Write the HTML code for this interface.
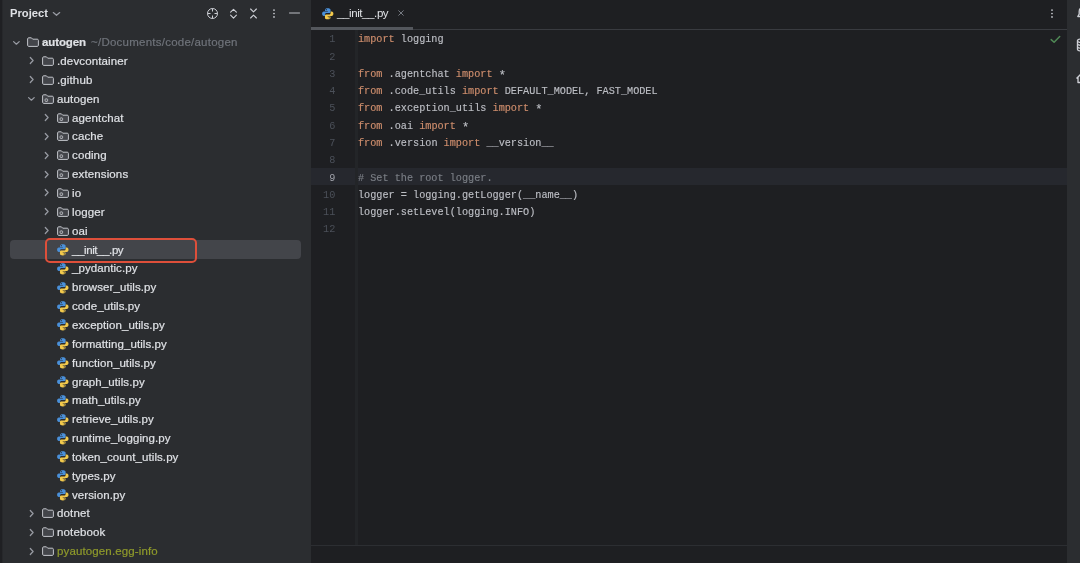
<!DOCTYPE html>
<html lang="en">
<head>
<meta charset="utf-8">
<title>autogen – __init__.py</title>
<style>
html,body{margin:0;padding:0;background:#1e1f22;}
body{width:1080px;height:563px;overflow:hidden;position:relative;font-family:"Liberation Sans",sans-serif;}
#panel{position:absolute;left:0;top:0;width:311px;height:563px;background:#2b2d30;}

#editor{position:absolute;left:311px;top:0;width:756px;height:563px;background:#1e1f22;}
#ledge{position:absolute;left:0;top:0;width:3px;height:563px;background:linear-gradient(90deg,#1f2023 0,#1f2023 55%,#2b2d30 100%);}
#rbar{position:absolute;left:1067px;top:0;width:13px;height:563px;background:#2b2d30;}
.tl,.cl,.ln,#hdr,#tabname{will-change:transform;}
.ic{position:absolute;display:block;overflow:visible;}
.tl{position:absolute;white-space:nowrap;font-size:11.500px;line-height:16px;color:#dfe1e5;letter-spacing:.13px;-webkit-text-stroke:.2px currentColor;}
.tl.f{letter-spacing:.08px;}
.tl.un{letter-spacing:-.4px;}
.tl.b{font-weight:bold;letter-spacing:-.1px;}
.tl.path{color:#6f737a;font-weight:normal;letter-spacing:.24px;}
.tl.ex{color:#8f9a2b;}
.selrow{position:absolute;left:10.200px;width:291.300px;height:18.700px;background:#43454a;border-radius:4px;}
.redbox{position:absolute;left:44.700px;width:152.500px;height:25.300px;border:2.400px solid #de4f3a;border-radius:5px;box-sizing:border-box;}
#hdr{position:absolute;left:10.200px;top:5.400px;font-size:11.200px;line-height:16px;font-weight:bold;color:#dfe1e5;}
/* editor */
#tabline{position:absolute;left:311px;top:28.800px;width:756px;height:1px;background:#393b40;}
#tabsel{position:absolute;left:311px;top:27.300px;width:102.300px;height:2.500px;background:#54575d;}
#tabname{position:absolute;left:337.300px;top:4.900px;font-size:11.500px;line-height:16px;color:#dfe1e5;white-space:nowrap;letter-spacing:-.4px;}
#gutline{position:absolute;left:354.500px;top:29.500px;width:3px;height:515px;background:#232528;}
#curline{position:absolute;left:311px;top:167.800px;width:756px;height:17.200px;background:#26282e;}
#hline{position:absolute;left:311px;top:544.700px;width:756px;height:1.400px;background:#2c2e32;}
.ln{position:absolute;left:311px;width:24.300px;text-align:right;font-family:"Liberation Mono",monospace;font-size:10.200px;line-height:16px;color:#4b5059;}
.ln.cur{color:#a1a3ab;}
.cl{position:absolute;left:358px;white-space:pre;font-family:"Liberation Mono",monospace;font-size:10.200px;line-height:16px;color:#bcbec4;-webkit-text-stroke:.15px currentColor;}
.cl i{font-style:normal;}
.cl .a{position:relative;top:2.200px;font-size:12px;line-height:10px;}
.cl .k{color:#cf8e6d;}
.cl .c{color:#7a7e85;}
</style>
</head>
<body>
<div id="panel"></div>
<div id="editor"></div>
<div id="rbar"></div>
<div id="ledge"></div>

<!-- project header -->
<span id="hdr">Project</span>
<svg class="ic" style="left:52.200px;top:11.300px" width="9" height="6" viewBox="0 0 9 6"><path d="M1.300 1.600l3.200 2.700 3.200-2.700" fill="none" stroke="#989ba3" stroke-width="1.250" stroke-linecap="round" stroke-linejoin="round"/></svg>
<!-- header tool icons -->
<svg class="ic" style="left:206px;top:7px" width="13" height="13" viewBox="0 0 13 13"><circle cx="6.500" cy="6.500" r="5" fill="none" stroke="#ced0d6" stroke-width="1"/><path d="M6.500 1.500v3M6.500 8.500v3M1.500 6.500h3M8.500 6.500h3" stroke="#ced0d6" stroke-width="1"/></svg>
<svg class="ic" style="left:229px;top:7px" width="9" height="13" viewBox="0 0 9 13"><path d="M1.600 5.200l2.900-2.900 2.900 2.900M1.600 8.200l2.900 2.900 2.900-2.900" fill="none" stroke="#ced0d6" stroke-width="1.100" stroke-linecap="round" stroke-linejoin="round"/></svg>
<svg class="ic" style="left:249px;top:7px" width="9" height="13" viewBox="0 0 9 13"><path d="M1.600 2l2.900 2.900L7.400 2M1.600 11l2.900-2.900L7.400 11" fill="none" stroke="#ced0d6" stroke-width="1.100" stroke-linecap="round" stroke-linejoin="round"/></svg>
<svg class="ic" style="left:272px;top:8px" width="4" height="11" viewBox="0 0 4 11"><circle cx="2" cy="2.100" r="0.850" fill="#ced0d6"/><circle cx="2" cy="5.500" r="0.850" fill="#ced0d6"/><circle cx="2" cy="8.900" r="0.850" fill="#ced0d6"/></svg>
<svg class="ic" style="left:289px;top:12.200px" width="11" height="2" viewBox="0 0 11 2"><path d="M0.500 1h10" stroke="#ced0d6" stroke-width="0.900" stroke-linecap="round"/></svg>

<!-- tree -->
<svg class="ic" style="left:12.1px;top:39.7px" width="9" height="6" viewBox="0 0 9 6"><path d="M1.600 1.600l2.800 2.600 2.800-2.600" fill="none" stroke="#989ba3" stroke-width="1.250" stroke-linecap="round" stroke-linejoin="round"/></svg>
<svg class="ic" style="left:27px;top:37.1px" width="12" height="10.500" viewBox="0 0 12 10.500"><path d="M1.700 0.800h2.700l1.300 1.400h4.600c.6 0 1.100.500 1.100 1.100v5c0 .6-.5 1.100-1.100 1.100H1.700c-.6 0-1.100-.5-1.100-1.100V1.900c0-.6.5-1.100 1.100-1.100z" fill="#43454a" stroke="#c3c5cb" stroke-width="1"/></svg>
<span class="tl b" style="left:41.5px;top:34.2px">autogen</span><span class="tl path" style="left:90.500px;top:34.2px">~/Documents/code/autogen</span>
<svg class="ic" style="left:28.5px;top:56.45px" width="6" height="9" viewBox="0 0 6 9"><path d="M1.300 1.500l2.800 3-2.800 3" fill="none" stroke="#989ba3" stroke-width="1.250" stroke-linecap="round" stroke-linejoin="round"/></svg>
<svg class="ic" style="left:42px;top:55.95px" width="12" height="10.500" viewBox="0 0 12 10.500"><path d="M1.700 0.800h2.700l1.300 1.400h4.600c.6 0 1.100.500 1.100 1.100v5c0 .6-.5 1.100-1.100 1.100H1.700c-.6 0-1.100-.5-1.100-1.100V1.900c0-.6.5-1.100 1.100-1.100z" fill="#43454a" stroke="#c3c5cb" stroke-width="1"/></svg>
<span class="tl" style="left:56.5px;top:53.05px">.devcontainer</span>
<svg class="ic" style="left:28.5px;top:75.3px" width="6" height="9" viewBox="0 0 6 9"><path d="M1.300 1.500l2.800 3-2.800 3" fill="none" stroke="#989ba3" stroke-width="1.250" stroke-linecap="round" stroke-linejoin="round"/></svg>
<svg class="ic" style="left:42px;top:74.8px" width="12" height="10.500" viewBox="0 0 12 10.500"><path d="M1.700 0.800h2.700l1.300 1.400h4.600c.6 0 1.100.500 1.100 1.100v5c0 .6-.5 1.100-1.100 1.100H1.700c-.6 0-1.100-.5-1.100-1.100V1.900c0-.6.5-1.100 1.100-1.100z" fill="#43454a" stroke="#c3c5cb" stroke-width="1"/></svg>
<span class="tl" style="left:56.5px;top:71.9px">.github</span>
<svg class="ic" style="left:27.1px;top:96.25px" width="9" height="6" viewBox="0 0 9 6"><path d="M1.600 1.600l2.800 2.600 2.800-2.600" fill="none" stroke="#989ba3" stroke-width="1.250" stroke-linecap="round" stroke-linejoin="round"/></svg>
<svg class="ic" style="left:42px;top:93.65px" width="12" height="10.500" viewBox="0 0 12 10.500"><path d="M1.700 0.800h2.700l1.300 1.400h4.600c.6 0 1.100.500 1.100 1.100v5c0 .6-.5 1.100-1.100 1.100H1.700c-.6 0-1.100-.5-1.100-1.100V1.900c0-.6.5-1.100 1.100-1.100z" fill="#43454a" stroke="#c3c5cb" stroke-width="1"/><rect x="3.100" y="4.900" width="2.500" height="2.500" rx="0.600" fill="none" stroke="#c3c5cb" stroke-width="0.9"/></svg>
<span class="tl" style="left:56.5px;top:90.75px">autogen</span>
<svg class="ic" style="left:43.5px;top:113px" width="6" height="9" viewBox="0 0 6 9"><path d="M1.300 1.500l2.800 3-2.800 3" fill="none" stroke="#989ba3" stroke-width="1.250" stroke-linecap="round" stroke-linejoin="round"/></svg>
<svg class="ic" style="left:57px;top:112.5px" width="12" height="10.500" viewBox="0 0 12 10.500"><path d="M1.700 0.800h2.700l1.300 1.400h4.600c.6 0 1.100.500 1.100 1.100v5c0 .6-.5 1.100-1.100 1.100H1.700c-.6 0-1.100-.5-1.100-1.100V1.900c0-.6.5-1.100 1.100-1.100z" fill="#43454a" stroke="#c3c5cb" stroke-width="1"/><rect x="3.100" y="4.900" width="2.500" height="2.500" rx="0.600" fill="none" stroke="#c3c5cb" stroke-width="0.9"/></svg>
<span class="tl" style="left:71.5px;top:109.6px">agentchat</span>
<svg class="ic" style="left:43.5px;top:131.85px" width="6" height="9" viewBox="0 0 6 9"><path d="M1.300 1.500l2.800 3-2.800 3" fill="none" stroke="#989ba3" stroke-width="1.250" stroke-linecap="round" stroke-linejoin="round"/></svg>
<svg class="ic" style="left:57px;top:131.35px" width="12" height="10.500" viewBox="0 0 12 10.500"><path d="M1.700 0.800h2.700l1.300 1.400h4.600c.6 0 1.100.500 1.100 1.100v5c0 .6-.5 1.100-1.100 1.100H1.700c-.6 0-1.100-.5-1.100-1.100V1.900c0-.6.5-1.100 1.100-1.100z" fill="#43454a" stroke="#c3c5cb" stroke-width="1"/><rect x="3.100" y="4.900" width="2.500" height="2.500" rx="0.600" fill="none" stroke="#c3c5cb" stroke-width="0.9"/></svg>
<span class="tl" style="left:71.5px;top:128.45px">cache</span>
<svg class="ic" style="left:43.5px;top:150.7px" width="6" height="9" viewBox="0 0 6 9"><path d="M1.300 1.500l2.800 3-2.800 3" fill="none" stroke="#989ba3" stroke-width="1.250" stroke-linecap="round" stroke-linejoin="round"/></svg>
<svg class="ic" style="left:57px;top:150.2px" width="12" height="10.500" viewBox="0 0 12 10.500"><path d="M1.700 0.800h2.700l1.300 1.400h4.600c.6 0 1.100.500 1.100 1.100v5c0 .6-.5 1.100-1.100 1.100H1.700c-.6 0-1.100-.5-1.100-1.100V1.900c0-.6.5-1.100 1.100-1.100z" fill="#43454a" stroke="#c3c5cb" stroke-width="1"/><rect x="3.100" y="4.900" width="2.500" height="2.500" rx="0.600" fill="none" stroke="#c3c5cb" stroke-width="0.9"/></svg>
<span class="tl" style="left:71.5px;top:147.3px">coding</span>
<svg class="ic" style="left:43.5px;top:169.55px" width="6" height="9" viewBox="0 0 6 9"><path d="M1.300 1.500l2.800 3-2.800 3" fill="none" stroke="#989ba3" stroke-width="1.250" stroke-linecap="round" stroke-linejoin="round"/></svg>
<svg class="ic" style="left:57px;top:169.05px" width="12" height="10.500" viewBox="0 0 12 10.500"><path d="M1.700 0.800h2.700l1.300 1.400h4.600c.6 0 1.100.500 1.100 1.100v5c0 .6-.5 1.100-1.100 1.100H1.700c-.6 0-1.100-.5-1.100-1.100V1.900c0-.6.5-1.100 1.100-1.100z" fill="#43454a" stroke="#c3c5cb" stroke-width="1"/><rect x="3.100" y="4.900" width="2.500" height="2.500" rx="0.600" fill="none" stroke="#c3c5cb" stroke-width="0.9"/></svg>
<span class="tl" style="left:71.5px;top:166.15px">extensions</span>
<svg class="ic" style="left:43.5px;top:188.4px" width="6" height="9" viewBox="0 0 6 9"><path d="M1.300 1.500l2.800 3-2.800 3" fill="none" stroke="#989ba3" stroke-width="1.250" stroke-linecap="round" stroke-linejoin="round"/></svg>
<svg class="ic" style="left:57px;top:187.9px" width="12" height="10.500" viewBox="0 0 12 10.500"><path d="M1.700 0.800h2.700l1.300 1.400h4.600c.6 0 1.100.500 1.100 1.100v5c0 .6-.5 1.100-1.100 1.100H1.700c-.6 0-1.100-.5-1.100-1.100V1.900c0-.6.5-1.100 1.100-1.100z" fill="#43454a" stroke="#c3c5cb" stroke-width="1"/><rect x="3.100" y="4.900" width="2.500" height="2.500" rx="0.600" fill="none" stroke="#c3c5cb" stroke-width="0.9"/></svg>
<span class="tl" style="left:71.5px;top:185px">io</span>
<svg class="ic" style="left:43.5px;top:207.25px" width="6" height="9" viewBox="0 0 6 9"><path d="M1.300 1.500l2.800 3-2.800 3" fill="none" stroke="#989ba3" stroke-width="1.250" stroke-linecap="round" stroke-linejoin="round"/></svg>
<svg class="ic" style="left:57px;top:206.75px" width="12" height="10.500" viewBox="0 0 12 10.500"><path d="M1.700 0.800h2.700l1.300 1.400h4.600c.6 0 1.100.500 1.100 1.100v5c0 .6-.5 1.100-1.100 1.100H1.700c-.6 0-1.100-.5-1.100-1.100V1.900c0-.6.5-1.100 1.100-1.100z" fill="#43454a" stroke="#c3c5cb" stroke-width="1"/><rect x="3.100" y="4.900" width="2.500" height="2.500" rx="0.600" fill="none" stroke="#c3c5cb" stroke-width="0.9"/></svg>
<span class="tl" style="left:71.5px;top:203.85px">logger</span>
<svg class="ic" style="left:43.5px;top:226.1px" width="6" height="9" viewBox="0 0 6 9"><path d="M1.300 1.500l2.800 3-2.800 3" fill="none" stroke="#989ba3" stroke-width="1.250" stroke-linecap="round" stroke-linejoin="round"/></svg>
<svg class="ic" style="left:57px;top:225.6px" width="12" height="10.500" viewBox="0 0 12 10.500"><path d="M1.700 0.800h2.700l1.300 1.400h4.600c.6 0 1.100.500 1.100 1.100v5c0 .6-.5 1.100-1.100 1.100H1.700c-.6 0-1.100-.5-1.100-1.100V1.900c0-.6.5-1.100 1.100-1.100z" fill="#43454a" stroke="#c3c5cb" stroke-width="1"/><rect x="3.100" y="4.900" width="2.500" height="2.500" rx="0.600" fill="none" stroke="#c3c5cb" stroke-width="0.9"/></svg>
<span class="tl" style="left:71.5px;top:222.7px">oai</span>
<div class="selrow" style="top:240.25px"></div>
<svg class="ic" style="left:57.1px;top:244.05px" width="11.600" height="11.600" viewBox="0 0 11 11"><path d="M5.4 0.2c-1.6 0-2.5.5-2.5 1.5v1.2h2.7v.5H1.7C.7 3.400.1 4.300.1 5.500s.6 2.100 1.600 2.100h1.100V6.300c0-.9.700-1.500 1.600-1.500h2.500c.7 0 1.300-.5 1.300-1.200V1.700C8.200.700 7.200.2 5.400.2z" fill="#4a90d9"/><path d="M5.600 10.800c1.600 0 2.500-.5 2.500-1.500V8.100H5.400v-.5h3.900c1 0 1.600-.9 1.600-2.100s-.6-2.100-1.600-2.100H8.200v1.300c0 .9-.7 1.500-1.600 1.500H4.100c-.7 0-1.300.5-1.300 1.200v1.900c0 1 1 1.500 2.800 1.500z" fill="#f2c94c"/><circle cx="4.100" cy="1.600" r=".55" fill="#2b2d30"/><circle cx="6.900" cy="9.400" r=".55" fill="#2b2d30"/></svg>
<span class="tl f un" style="left:71.5px;top:241.55px">__init__.py</span>
<div class="redbox" style="top:237.95px"></div>
<svg class="ic" style="left:57.1px;top:262.9px" width="11.600" height="11.600" viewBox="0 0 11 11"><path d="M5.4 0.2c-1.6 0-2.5.5-2.5 1.5v1.2h2.7v.5H1.7C.7 3.400.1 4.300.1 5.500s.6 2.100 1.600 2.100h1.100V6.300c0-.9.700-1.500 1.600-1.500h2.500c.7 0 1.300-.5 1.300-1.200V1.700C8.200.700 7.200.2 5.400.2z" fill="#4a90d9"/><path d="M5.600 10.800c1.600 0 2.500-.5 2.500-1.500V8.100H5.400v-.5h3.900c1 0 1.600-.9 1.600-2.100s-.6-2.100-1.600-2.100H8.200v1.300c0 .9-.7 1.500-1.600 1.500H4.100c-.7 0-1.300.5-1.300 1.200v1.900c0 1 1 1.500 2.800 1.500z" fill="#f2c94c"/><circle cx="4.100" cy="1.600" r=".55" fill="#2b2d30"/><circle cx="6.900" cy="9.400" r=".55" fill="#2b2d30"/></svg>
<span class="tl f" style="left:71.5px;top:260.4px">_pydantic.py</span>
<svg class="ic" style="left:57.1px;top:281.75px" width="11.600" height="11.600" viewBox="0 0 11 11"><path d="M5.4 0.2c-1.6 0-2.5.5-2.5 1.5v1.2h2.7v.5H1.7C.7 3.400.1 4.300.1 5.500s.6 2.100 1.600 2.100h1.100V6.300c0-.9.700-1.500 1.600-1.500h2.500c.7 0 1.300-.5 1.300-1.200V1.700C8.200.700 7.200.2 5.400.2z" fill="#4a90d9"/><path d="M5.600 10.800c1.600 0 2.500-.5 2.500-1.500V8.100H5.400v-.5h3.900c1 0 1.600-.9 1.600-2.100s-.6-2.100-1.600-2.100H8.200v1.300c0 .9-.7 1.500-1.600 1.500H4.100c-.7 0-1.300.5-1.300 1.200v1.900c0 1 1 1.500 2.800 1.500z" fill="#f2c94c"/><circle cx="4.100" cy="1.600" r=".55" fill="#2b2d30"/><circle cx="6.900" cy="9.400" r=".55" fill="#2b2d30"/></svg>
<span class="tl f" style="left:71.5px;top:279.25px">browser_utils.py</span>
<svg class="ic" style="left:57.1px;top:300.6px" width="11.600" height="11.600" viewBox="0 0 11 11"><path d="M5.4 0.2c-1.6 0-2.5.5-2.5 1.5v1.2h2.7v.5H1.7C.7 3.400.1 4.300.1 5.500s.6 2.100 1.600 2.100h1.100V6.300c0-.9.700-1.500 1.600-1.500h2.500c.7 0 1.300-.5 1.300-1.200V1.700C8.200.700 7.200.2 5.400.2z" fill="#4a90d9"/><path d="M5.600 10.800c1.600 0 2.500-.5 2.500-1.500V8.100H5.400v-.5h3.900c1 0 1.600-.9 1.600-2.100s-.6-2.100-1.600-2.100H8.200v1.300c0 .9-.7 1.500-1.600 1.500H4.100c-.7 0-1.300.5-1.300 1.200v1.900c0 1 1 1.500 2.800 1.500z" fill="#f2c94c"/><circle cx="4.100" cy="1.600" r=".55" fill="#2b2d30"/><circle cx="6.900" cy="9.400" r=".55" fill="#2b2d30"/></svg>
<span class="tl f" style="left:71.5px;top:298.1px">code_utils.py</span>
<svg class="ic" style="left:57.1px;top:319.45px" width="11.600" height="11.600" viewBox="0 0 11 11"><path d="M5.4 0.2c-1.6 0-2.5.5-2.5 1.5v1.2h2.7v.5H1.7C.7 3.400.1 4.300.1 5.500s.6 2.100 1.600 2.100h1.100V6.300c0-.9.700-1.500 1.600-1.500h2.500c.7 0 1.300-.5 1.300-1.200V1.700C8.200.700 7.200.2 5.400.2z" fill="#4a90d9"/><path d="M5.600 10.800c1.600 0 2.500-.5 2.500-1.500V8.100H5.400v-.5h3.900c1 0 1.600-.9 1.600-2.100s-.6-2.100-1.600-2.100H8.200v1.300c0 .9-.7 1.500-1.600 1.500H4.100c-.7 0-1.300.5-1.300 1.200v1.900c0 1 1 1.500 2.800 1.500z" fill="#f2c94c"/><circle cx="4.100" cy="1.600" r=".55" fill="#2b2d30"/><circle cx="6.900" cy="9.400" r=".55" fill="#2b2d30"/></svg>
<span class="tl f" style="left:71.5px;top:316.95px">exception_utils.py</span>
<svg class="ic" style="left:57.1px;top:338.3px" width="11.600" height="11.600" viewBox="0 0 11 11"><path d="M5.4 0.2c-1.6 0-2.5.5-2.5 1.5v1.2h2.7v.5H1.7C.7 3.400.1 4.300.1 5.500s.6 2.100 1.600 2.100h1.100V6.300c0-.9.700-1.500 1.600-1.500h2.500c.7 0 1.300-.5 1.300-1.200V1.700C8.200.700 7.200.2 5.400.2z" fill="#4a90d9"/><path d="M5.600 10.800c1.600 0 2.500-.5 2.500-1.500V8.100H5.400v-.5h3.900c1 0 1.600-.9 1.600-2.100s-.6-2.100-1.600-2.100H8.200v1.300c0 .9-.7 1.500-1.600 1.500H4.100c-.7 0-1.300.5-1.300 1.200v1.900c0 1 1 1.500 2.800 1.500z" fill="#f2c94c"/><circle cx="4.100" cy="1.600" r=".55" fill="#2b2d30"/><circle cx="6.900" cy="9.400" r=".55" fill="#2b2d30"/></svg>
<span class="tl f" style="left:71.5px;top:335.8px">formatting_utils.py</span>
<svg class="ic" style="left:57.1px;top:357.15px" width="11.600" height="11.600" viewBox="0 0 11 11"><path d="M5.4 0.2c-1.6 0-2.5.5-2.5 1.5v1.2h2.7v.5H1.7C.7 3.400.1 4.300.1 5.500s.6 2.100 1.600 2.100h1.100V6.300c0-.9.700-1.500 1.600-1.500h2.500c.7 0 1.300-.5 1.300-1.200V1.700C8.200.700 7.200.2 5.400.2z" fill="#4a90d9"/><path d="M5.600 10.800c1.600 0 2.500-.5 2.500-1.500V8.100H5.400v-.5h3.900c1 0 1.600-.9 1.600-2.100s-.6-2.100-1.600-2.100H8.200v1.300c0 .9-.7 1.500-1.600 1.500H4.100c-.7 0-1.300.5-1.300 1.200v1.900c0 1 1 1.500 2.800 1.500z" fill="#f2c94c"/><circle cx="4.100" cy="1.600" r=".55" fill="#2b2d30"/><circle cx="6.900" cy="9.400" r=".55" fill="#2b2d30"/></svg>
<span class="tl f" style="left:71.5px;top:354.65px">function_utils.py</span>
<svg class="ic" style="left:57.1px;top:376px" width="11.600" height="11.600" viewBox="0 0 11 11"><path d="M5.4 0.2c-1.6 0-2.5.5-2.5 1.5v1.2h2.7v.5H1.7C.7 3.400.1 4.300.1 5.500s.6 2.100 1.600 2.100h1.100V6.300c0-.9.700-1.500 1.600-1.500h2.500c.7 0 1.300-.5 1.300-1.200V1.700C8.200.700 7.200.2 5.400.2z" fill="#4a90d9"/><path d="M5.600 10.800c1.600 0 2.500-.5 2.500-1.500V8.100H5.400v-.5h3.900c1 0 1.600-.9 1.600-2.100s-.6-2.100-1.600-2.100H8.200v1.300c0 .9-.7 1.500-1.600 1.500H4.100c-.7 0-1.300.5-1.300 1.200v1.900c0 1 1 1.500 2.800 1.500z" fill="#f2c94c"/><circle cx="4.100" cy="1.600" r=".55" fill="#2b2d30"/><circle cx="6.900" cy="9.400" r=".55" fill="#2b2d30"/></svg>
<span class="tl f" style="left:71.5px;top:373.5px">graph_utils.py</span>
<svg class="ic" style="left:57.1px;top:394.85px" width="11.600" height="11.600" viewBox="0 0 11 11"><path d="M5.4 0.2c-1.6 0-2.5.5-2.5 1.5v1.2h2.7v.5H1.7C.7 3.400.1 4.300.1 5.500s.6 2.100 1.600 2.100h1.100V6.300c0-.9.700-1.500 1.600-1.500h2.500c.7 0 1.300-.5 1.300-1.200V1.700C8.200.700 7.200.2 5.400.2z" fill="#4a90d9"/><path d="M5.600 10.800c1.600 0 2.500-.5 2.500-1.500V8.100H5.400v-.5h3.900c1 0 1.600-.9 1.600-2.100s-.6-2.100-1.600-2.100H8.200v1.300c0 .9-.7 1.500-1.600 1.500H4.100c-.7 0-1.300.5-1.300 1.200v1.900c0 1 1 1.500 2.800 1.500z" fill="#f2c94c"/><circle cx="4.100" cy="1.600" r=".55" fill="#2b2d30"/><circle cx="6.900" cy="9.400" r=".55" fill="#2b2d30"/></svg>
<span class="tl f" style="left:71.5px;top:392.35px">math_utils.py</span>
<svg class="ic" style="left:57.1px;top:413.7px" width="11.600" height="11.600" viewBox="0 0 11 11"><path d="M5.4 0.2c-1.6 0-2.5.5-2.5 1.5v1.2h2.7v.5H1.7C.7 3.400.1 4.300.1 5.500s.6 2.100 1.600 2.100h1.100V6.300c0-.9.700-1.500 1.600-1.500h2.500c.7 0 1.300-.5 1.300-1.200V1.700C8.200.700 7.200.2 5.400.2z" fill="#4a90d9"/><path d="M5.600 10.800c1.600 0 2.500-.5 2.500-1.500V8.100H5.400v-.5h3.900c1 0 1.600-.9 1.600-2.100s-.6-2.100-1.600-2.100H8.200v1.300c0 .9-.7 1.500-1.600 1.500H4.100c-.7 0-1.300.5-1.300 1.200v1.900c0 1 1 1.500 2.800 1.500z" fill="#f2c94c"/><circle cx="4.100" cy="1.600" r=".55" fill="#2b2d30"/><circle cx="6.900" cy="9.400" r=".55" fill="#2b2d30"/></svg>
<span class="tl f" style="left:71.5px;top:411.2px">retrieve_utils.py</span>
<svg class="ic" style="left:57.1px;top:432.55px" width="11.600" height="11.600" viewBox="0 0 11 11"><path d="M5.4 0.2c-1.6 0-2.5.5-2.5 1.5v1.2h2.7v.5H1.7C.7 3.400.1 4.300.1 5.500s.6 2.100 1.600 2.100h1.100V6.300c0-.9.700-1.500 1.600-1.500h2.500c.7 0 1.300-.5 1.300-1.200V1.700C8.200.700 7.200.2 5.400.2z" fill="#4a90d9"/><path d="M5.600 10.800c1.600 0 2.500-.5 2.500-1.500V8.100H5.400v-.5h3.900c1 0 1.600-.9 1.600-2.100s-.6-2.100-1.600-2.100H8.200v1.300c0 .9-.7 1.500-1.600 1.500H4.100c-.7 0-1.300.5-1.300 1.200v1.900c0 1 1 1.500 2.800 1.500z" fill="#f2c94c"/><circle cx="4.100" cy="1.600" r=".55" fill="#2b2d30"/><circle cx="6.900" cy="9.400" r=".55" fill="#2b2d30"/></svg>
<span class="tl f" style="left:71.5px;top:430.05px">runtime_logging.py</span>
<svg class="ic" style="left:57.1px;top:451.4px" width="11.600" height="11.600" viewBox="0 0 11 11"><path d="M5.4 0.2c-1.6 0-2.5.5-2.5 1.5v1.2h2.7v.5H1.7C.7 3.400.1 4.300.1 5.500s.6 2.100 1.600 2.100h1.100V6.300c0-.9.700-1.500 1.600-1.500h2.500c.7 0 1.300-.5 1.300-1.200V1.700C8.200.700 7.200.2 5.400.2z" fill="#4a90d9"/><path d="M5.600 10.800c1.600 0 2.500-.5 2.500-1.500V8.100H5.400v-.5h3.900c1 0 1.600-.9 1.600-2.100s-.6-2.100-1.600-2.100H8.200v1.300c0 .9-.7 1.500-1.600 1.500H4.100c-.7 0-1.300.5-1.300 1.200v1.900c0 1 1 1.500 2.800 1.500z" fill="#f2c94c"/><circle cx="4.100" cy="1.600" r=".55" fill="#2b2d30"/><circle cx="6.900" cy="9.400" r=".55" fill="#2b2d30"/></svg>
<span class="tl f" style="left:71.5px;top:448.9px">token_count_utils.py</span>
<svg class="ic" style="left:57.1px;top:470.25px" width="11.600" height="11.600" viewBox="0 0 11 11"><path d="M5.4 0.2c-1.6 0-2.5.5-2.5 1.5v1.2h2.7v.5H1.7C.7 3.400.1 4.300.1 5.500s.6 2.100 1.600 2.100h1.100V6.300c0-.9.700-1.500 1.600-1.500h2.500c.7 0 1.300-.5 1.300-1.200V1.700C8.200.700 7.200.2 5.400.2z" fill="#4a90d9"/><path d="M5.600 10.800c1.600 0 2.500-.5 2.500-1.500V8.100H5.400v-.5h3.900c1 0 1.600-.9 1.600-2.100s-.6-2.100-1.600-2.100H8.200v1.300c0 .9-.7 1.500-1.600 1.500H4.100c-.7 0-1.300.5-1.300 1.200v1.900c0 1 1 1.500 2.800 1.500z" fill="#f2c94c"/><circle cx="4.100" cy="1.600" r=".55" fill="#2b2d30"/><circle cx="6.900" cy="9.400" r=".55" fill="#2b2d30"/></svg>
<span class="tl f" style="left:71.5px;top:467.75px">types.py</span>
<svg class="ic" style="left:57.1px;top:489.1px" width="11.600" height="11.600" viewBox="0 0 11 11"><path d="M5.4 0.2c-1.6 0-2.5.5-2.5 1.5v1.2h2.7v.5H1.7C.7 3.400.1 4.300.1 5.500s.6 2.100 1.600 2.100h1.100V6.300c0-.9.700-1.500 1.600-1.500h2.500c.7 0 1.300-.5 1.300-1.200V1.700C8.200.700 7.200.2 5.400.2z" fill="#4a90d9"/><path d="M5.600 10.800c1.600 0 2.500-.5 2.500-1.500V8.100H5.400v-.5h3.900c1 0 1.600-.9 1.600-2.100s-.6-2.100-1.600-2.100H8.200v1.300c0 .9-.7 1.500-1.600 1.500H4.100c-.7 0-1.300.5-1.300 1.200v1.900c0 1 1 1.500 2.800 1.500z" fill="#f2c94c"/><circle cx="4.100" cy="1.600" r=".55" fill="#2b2d30"/><circle cx="6.900" cy="9.400" r=".55" fill="#2b2d30"/></svg>
<span class="tl f" style="left:71.5px;top:486.6px">version.py</span>
<svg class="ic" style="left:28.5px;top:508.85px" width="6" height="9" viewBox="0 0 6 9"><path d="M1.300 1.500l2.800 3-2.800 3" fill="none" stroke="#989ba3" stroke-width="1.250" stroke-linecap="round" stroke-linejoin="round"/></svg>
<svg class="ic" style="left:42px;top:508.35px" width="12" height="10.500" viewBox="0 0 12 10.500"><path d="M1.700 0.800h2.700l1.300 1.400h4.600c.6 0 1.100.500 1.100 1.100v5c0 .6-.5 1.100-1.100 1.100H1.700c-.6 0-1.100-.5-1.100-1.100V1.900c0-.6.5-1.100 1.100-1.100z" fill="#43454a" stroke="#c3c5cb" stroke-width="1"/></svg>
<span class="tl" style="left:56.5px;top:505.45px">dotnet</span>
<svg class="ic" style="left:28.5px;top:527.7px" width="6" height="9" viewBox="0 0 6 9"><path d="M1.300 1.500l2.800 3-2.800 3" fill="none" stroke="#989ba3" stroke-width="1.250" stroke-linecap="round" stroke-linejoin="round"/></svg>
<svg class="ic" style="left:42px;top:527.2px" width="12" height="10.500" viewBox="0 0 12 10.500"><path d="M1.700 0.800h2.700l1.300 1.400h4.600c.6 0 1.100.500 1.100 1.100v5c0 .6-.5 1.100-1.100 1.100H1.700c-.6 0-1.100-.5-1.100-1.100V1.900c0-.6.5-1.100 1.100-1.100z" fill="#43454a" stroke="#c3c5cb" stroke-width="1"/></svg>
<span class="tl" style="left:56.5px;top:524.3px">notebook</span>
<svg class="ic" style="left:28.5px;top:546.55px" width="6" height="9" viewBox="0 0 6 9"><path d="M1.300 1.500l2.800 3-2.800 3" fill="none" stroke="#989ba3" stroke-width="1.250" stroke-linecap="round" stroke-linejoin="round"/></svg>
<svg class="ic" style="left:42px;top:546.05px" width="12" height="10.500" viewBox="0 0 12 10.500"><path d="M1.700 0.800h2.700l1.300 1.400h4.600c.6 0 1.100.500 1.100 1.100v5c0 .6-.5 1.100-1.100 1.100H1.700c-.6 0-1.100-.5-1.100-1.100V1.900c0-.6.5-1.100 1.100-1.100z" fill="#43454a" stroke="#c3c5cb" stroke-width="1"/></svg>
<span class="tl ex" style="left:56.5px;top:543.15px">pyautogen.egg-info</span>

<!-- editor -->
<div id="tabline"></div>
<div id="tabsel"></div>
<svg class="ic" style="left:321.600px;top:7.800px" width="11.500" height="11.500" viewBox="0 0 11 11"><path d="M5.4 0.2c-1.6 0-2.5.5-2.5 1.5v1.2h2.7v.5H1.7C.7 3.400.1 4.300.1 5.500s.6 2.100 1.600 2.100h1.100V6.300c0-.9.700-1.500 1.600-1.500h2.500c.7 0 1.300-.5 1.300-1.200V1.700C8.200.700 7.200.2 5.400.2z" fill="#4a90d9"/><path d="M5.600 10.800c1.600 0 2.500-.5 2.500-1.500V8.100H5.400v-.5h3.900c1 0 1.600-.9 1.600-2.100s-.6-2.100-1.600-2.100H8.200v1.300c0 .9-.7 1.500-1.600 1.500H4.100c-.7 0-1.300.5-1.300 1.200v1.900c0 1 1 1.500 2.800 1.500z" fill="#f2c94c"/><circle cx="4.100" cy="1.600" r=".55" fill="#1e1f22"/><circle cx="6.900" cy="9.400" r=".55" fill="#1e1f22"/></svg>
<span id="tabname">__init__.py</span>
<svg class="ic" style="left:398px;top:10px" width="6" height="6" viewBox="0 0 6 6"><path d="M0.700 0.700l4.600 4.600M5.300 0.700L0.700 5.300" stroke="#767a82" stroke-width="1" stroke-linecap="round"/></svg>
<svg class="ic" style="left:1049.700px;top:8px" width="4" height="11" viewBox="0 0 4 11"><circle cx="2" cy="2.100" r="0.850" fill="#ced0d6"/><circle cx="2" cy="5.500" r="0.850" fill="#ced0d6"/><circle cx="2" cy="8.900" r="0.850" fill="#ced0d6"/></svg>
<svg class="ic" style="left:1050.400px;top:35.400px" width="11" height="9" viewBox="0 0 11 9"><path d="M1.200 4.600l2.900 2.700L9.700 1.500" fill="none" stroke="#4f8855" stroke-width="1.500" stroke-linecap="round" stroke-linejoin="round"/></svg>
<div id="curline"></div>
<div id="gutline"></div>
<div id="hline"></div>
<span class="ln" style="top:32.4px">1</span>
<span class="cl" style="top:32.4px"><i class="k">import</i> logging</span>
<span class="ln" style="top:49.67px">2</span>
<span class="ln" style="top:66.94px">3</span>
<span class="cl" style="top:66.94px"><i class="k">from</i> .agentchat <i class="k">import</i> <i class="a">*</i></span>
<span class="ln" style="top:84.21px">4</span>
<span class="cl" style="top:84.21px"><i class="k">from</i> .code_utils <i class="k">import</i> DEFAULT_MODEL, FAST_MODEL</span>
<span class="ln" style="top:101.48px">5</span>
<span class="cl" style="top:101.48px"><i class="k">from</i> .exception_utils <i class="k">import</i> <i class="a">*</i></span>
<span class="ln" style="top:118.75px">6</span>
<span class="cl" style="top:118.75px"><i class="k">from</i> .oai <i class="k">import</i> <i class="a">*</i></span>
<span class="ln" style="top:136.02px">7</span>
<span class="cl" style="top:136.02px"><i class="k">from</i> .version <i class="k">import</i> __version__</span>
<span class="ln" style="top:153.29px">8</span>
<span class="ln cur" style="top:170.56px">9</span>
<span class="cl" style="top:170.56px"><i class="c"># Set the root logger.</i></span>
<span class="ln" style="top:187.83px">10</span>
<span class="cl" style="top:187.83px">logger = logging.getLogger(__name__)</span>
<span class="ln" style="top:205.1px">11</span>
<span class="cl" style="top:205.1px">logger.setLevel(logging.INFO)</span>
<span class="ln" style="top:222.37px">12</span>

<!-- right tool strip (partially visible) -->
<svg class="ic" style="left:1075.500px;top:5.500px" width="14" height="14" viewBox="0 0 14 14"><path d="M7 1.500c-2.300 0-3.800 1.700-3.800 4v2.600L1.800 10.500h10.400L10.800 8.100V5.500c0-2.300-1.500-4-3.800-4zM5.600 12.300h2.800" fill="none" stroke="#ced0d6" stroke-width="1.350" stroke-linejoin="round"/></svg>
<svg class="ic" style="left:1076px;top:38px" width="12" height="14" viewBox="0 0 12 14"><ellipse cx="6" cy="2.800" rx="4.500" ry="1.800" fill="none" stroke="#ced0d6" stroke-width="1.350"/><path d="M1.500 2.800v8.400c0 1 2 1.800 4.500 1.800s4.500-.8 4.500-1.800V2.800M1.500 5.600c0 1 2 1.800 4.500 1.800s4.500-.8 4.500-1.800M1.500 8.400c0 1 2 1.800 4.500 1.800s4.500-.8 4.500-1.800" fill="none" stroke="#ced0d6" stroke-width="1.350"/></svg>
<svg class="ic" style="left:1075px;top:71.500px" width="12" height="12" viewBox="0 0 12 12"><path d="M1.500 6.500L6 2l4.500 4.500M3 5.500v5h6v-5" fill="none" stroke="#ced0d6" stroke-width="1.350" stroke-linejoin="round"/></svg>
</body>
</html>
